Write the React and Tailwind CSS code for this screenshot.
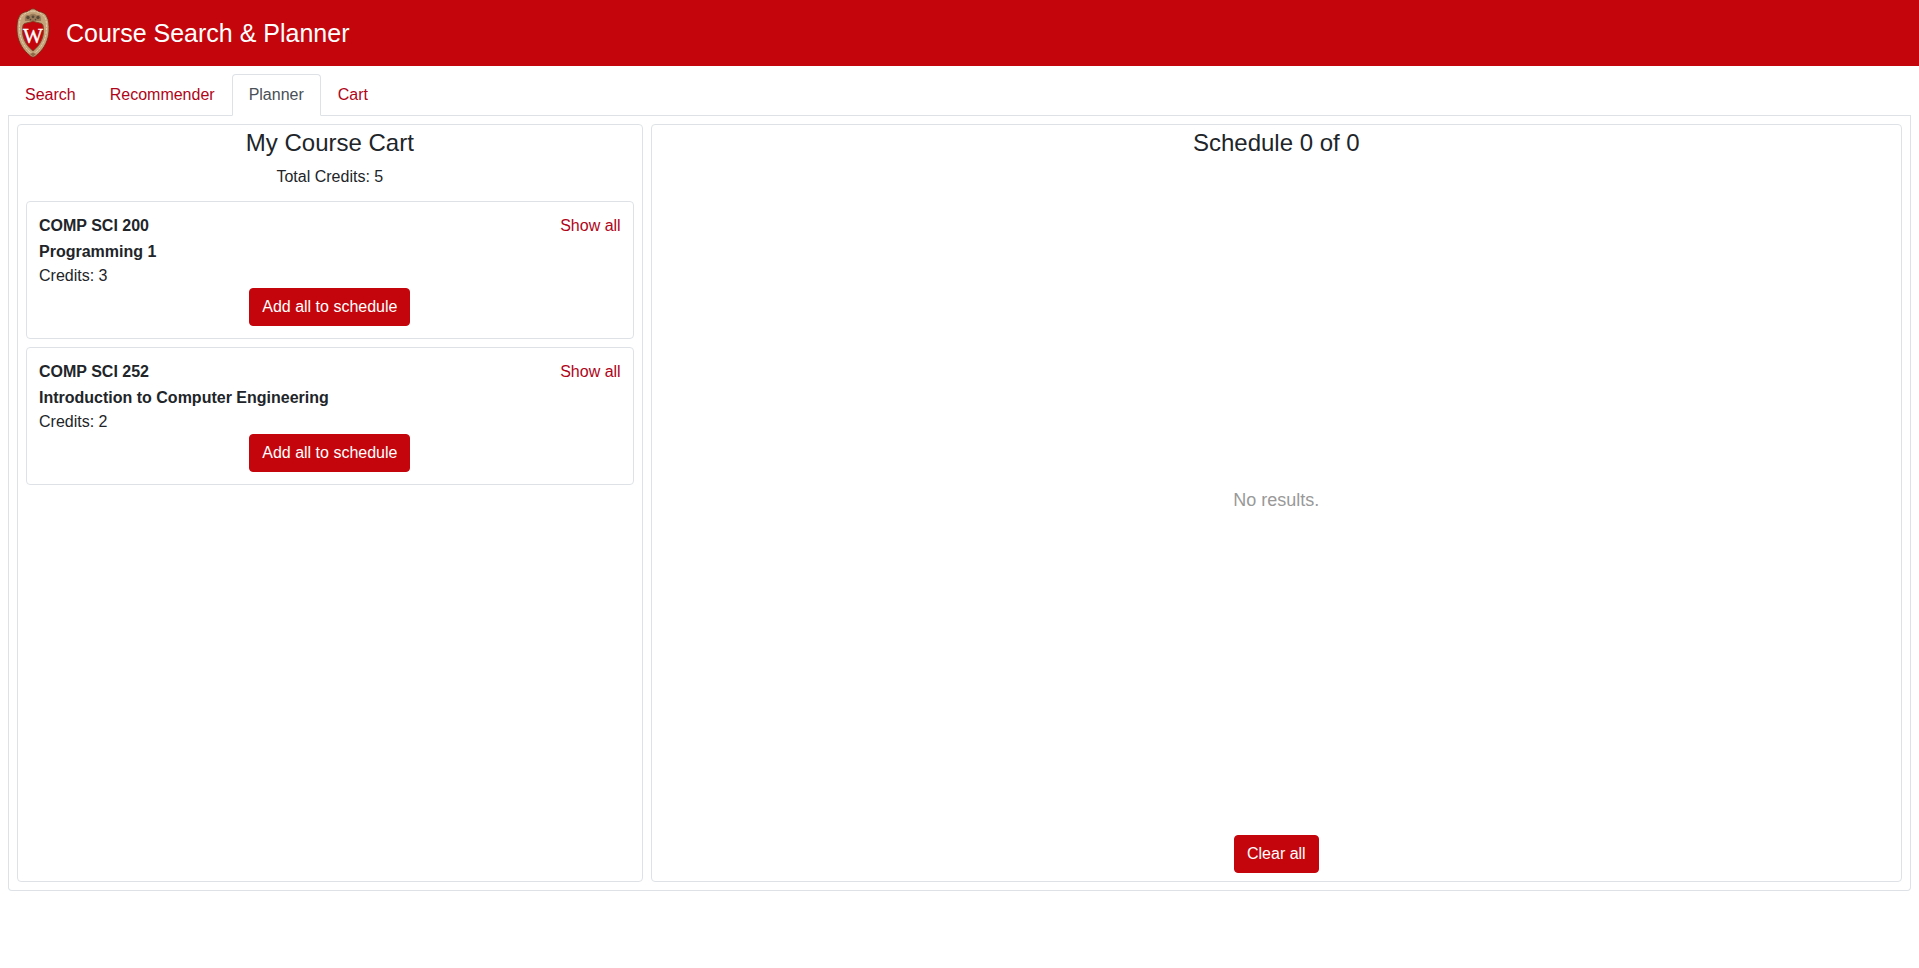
const tabs = ["Search", "Recommender", "Planner", "Cart"];

const courses = [
  { code: "COMP SCI 200", name: "Programming 1", credits: 3 },
  { code: "COMP SCI 252", name: "Introduction to Computer Engineering", credits: 2 },
];

function Crest() {
  return (
    <svg viewBox="0 0 34 50" className="h-[50px] w-[34px]" role="img" aria-label="University crest">
      <path
        d="M17 .8C19.500 .8 20.500 2.500 22.500 3.400C26 3.800 30 5.500 31 9C32.800 12 33.200 17 33 23C32.500 32 28.500 40 22.500 45.500C20.500 47 19 49.200 17 49.200C15 49.200 13.500 47 11.500 45.500C5.500 40 1.500 32 1 23C.8 17 1.200 12 3 9C4 5.500 8 3.800 11.500 3.400C13.500 2.500 14.500 .8 17 .8Z"
        fill="#c4a27a"
        stroke="#7d2a17"
        strokeWidth=".9"
      />
      <path
        d="M17 3C23 3.500 28.500 7 30 12C32.400 27 27.500 39 17 46.500C6.500 39 1.600 27 4 12C5.500 7 11 3.500 17 3Z"
        fill="none"
        stroke="#e3cfac"
        strokeWidth="1"
        strokeDasharray="2.500 1"
      />
      <path d="M9 13C8 7.500 11 6.200 13 7.500C15 5 19 5 21 7.500C23 6.200 26 7.500 25 13Z" fill="#9b7c5a" />
      <g fill="#574838">
        <circle cx="12" cy="9.500" r="1.700" />
        <circle cx="17" cy="8.800" r="1.400" />
        <circle cx="22" cy="9.500" r="1.700" />
        <circle cx="14.500" cy="11.600" r=".8" />
        <circle cx="19.500" cy="11.600" r=".8" />
      </g>
      <path
        d="M7 17.500C7.500 14.500 13 15.200 17 13C21 15.200 26.500 14.500 27 17.500C29.200 27 25 37 17 43C9 37 4.800 27 7 17.500Z"
        fill="#c5050c"
        stroke="#7d4a2c"
        strokeWidth="1"
      />
      <text
        x="17"
        y="35"
        textAnchor="middle"
        fill="#ffffff"
        stroke="#ffffff"
        strokeWidth=".4"
        fontFamily="Liberation Serif, serif"
        fontSize="21"
      >
        W
      </text>
      <path d="M14 46L17 44.500L20 46L17 48.500Z" fill="#8d6b48" />
    </svg>
  );
}

function Button({ children }) {
  return (
    <button type="button" className="rounded border border-[#c5050c] bg-[#c5050c] px-3 py-1.5 leading-6 text-white">
      {children}
    </button>
  );
}

function CourseCard({ course }) {
  return (
    <article className="flex flex-col rounded border border-[#dee2e6] p-3">
      <div className="flex items-start justify-between">
        <div>
          <h3 className="mb-0.5 font-bold">{course.code}</h3>
          <h4 className="font-bold">{course.name}</h4>
          <p>Credits: {course.credits}</p>
        </div>
        <button type="button" className="text-[#b00418]">
          Show all
        </button>
      </div>
      <div className="flex justify-center">
        <Button>Add all to schedule</Button>
      </div>
    </article>
  );
}

export default function App() {
  return (
    <div className="font-['Liberation_Sans',Arial,sans-serif] text-base leading-6 text-[#212529]">
      <header className="flex items-center gap-4 bg-[#c5050c] px-4 py-2 text-white">
        <Crest />
        <h1 className="text-[25px] leading-7">Course Search &amp; Planner</h1>
      </header>
      <main className="p-2">
        <nav className="flex border-b border-[#dee2e6]">
          {tabs.map((tab) => (
            <a
              key={tab}
              href={"#" + tab.toLowerCase()}
              aria-current={tab === "Planner" ? "page" : undefined}
              className={
                tab === "Planner"
                  ? "-mb-px rounded-t border border-[#dee2e6] border-b-white bg-white px-4 py-2 text-[#495057]"
                  : "-mb-px border border-transparent px-4 py-2 text-[#b00418]"
              }
            >
              {tab}
            </a>
          ))}
        </nav>
        <div className="grid h-[calc(80vh+1px)] grid-cols-[1fr_2fr] gap-2 rounded-b border border-t-0 border-[#dee2e6] p-2">
          <section className="rounded border border-[#dee2e6] px-2 pt-1 pb-2 text-center">
            <h2 className="mb-2 text-2xl leading-7">My Course Cart</h2>
            <p className="mb-3">Total Credits: {courses.reduce((sum, c) => sum + c.credits, 0)}</p>
            <div className="flex flex-col gap-2 text-left">
              {courses.map((course) => (
                <CourseCard key={course.code} course={course} />
              ))}
            </div>
          </section>
          <section className="flex flex-col items-center rounded border border-[#dee2e6] px-2 pt-1 pb-2">
            <h2 className="mb-2 text-2xl leading-7">Schedule 0 of 0</h2>
            <p className="flex flex-1 items-center text-lg text-[#999999]">No results.</p>
            <Button>Clear all</Button>
          </section>
        </div>
      </main>
    </div>
  );
}
